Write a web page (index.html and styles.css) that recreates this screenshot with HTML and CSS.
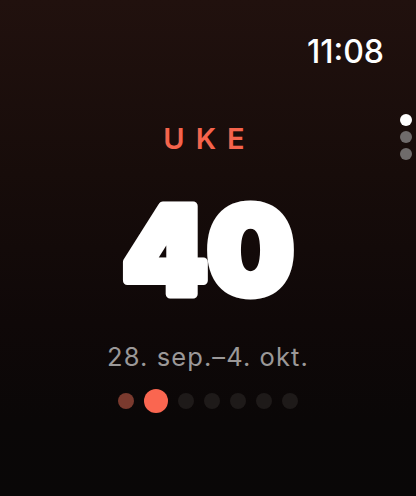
FILE: index.html
```html
<!DOCTYPE html>
<html lang="nb">
<head>
<meta charset="utf-8">
<title>Uke 40</title>
<link rel="stylesheet" href="styles.css">
</head>
<body>
<div class="screen">
  <header class="status">
    <span class="time">11:08</span>
  </header>
  <main class="week">
    <div class="label">UKE</div>
    <svg class="num" viewBox="0 0 220 150" width="220" height="150" aria-label="40">
      <text class="num-text" x="110" y="120" text-anchor="middle">40</text>
    </svg>
    <div class="range">28. sep.–4. okt.</div>
    <div class="dots">
      <span class="dot dot-prev"></span>
      <span class="dot dot-current"></span>
      <span class="dot"></span>
      <span class="dot"></span>
      <span class="dot"></span>
      <span class="dot"></span>
      <span class="dot"></span>
    </div>
  </main>
  <div class="pager">
    <span class="pager-dot pager-active"></span>
    <span class="pager-dot"></span>
    <span class="pager-dot"></span>
  </div>
</div>
</body>
</html>
```
FILE: styles.css
```css
html, body {
  margin: 0;
  padding: 0;
}

body {
  width: 416px;
  height: 496px;
  overflow: hidden;
  background: #080606;
  font-family: Inter, "Noto Sans", sans-serif;
}

.screen {
  position: relative;
  width: 416px;
  height: 496px;
  box-sizing: border-box;
  padding-top: 36px;
  background: linear-gradient(180deg, #21110e 0%, #170c0a 35%, #0f0808 65%, #0a0707 85%, #090707 100%);
  display: flex;
  flex-direction: column;
}

.status {
  display: flex;
  justify-content: flex-end;
  padding-right: 32px;
}

.time {
  color: #ffffff;
  font-size: 32px;
  line-height: 32px;
  font-weight: 500;
}

.week {
  display: flex;
  flex-direction: column;
  align-items: center;
}

.label {
  margin-top: 56px;
  color: #f5644c;
  font-size: 29px;
  line-height: 29px;
  font-weight: 600;
  letter-spacing: 11px;
  padding-left: 3px;
}

.num {
  display: block;
  margin-top: 21px;
}

.num-text {
  font-family: Inter, sans-serif;
  font-weight: 900;
  font-size: 121px;
  fill: #ffffff;
  stroke: #ffffff;
  stroke-width: 9px;
  stroke-linejoin: round;
}

.range {
  margin-top: 20px;
  color: #9b9898;
  font-size: 25.5px;
  line-height: 25px;
  font-weight: 400;
  letter-spacing: 1.1px;
}

.dots {
  margin-top: 20px;
  height: 24px;
  display: flex;
  align-items: center;
  gap: 10px;
}

.dot {
  width: 16px;
  height: 16px;
  border-radius: 50%;
  background: #1e1a19;
}

.dot-prev {
  background: #7a3a2e;
}

.dot-current {
  width: 24px;
  height: 24px;
  background: #fa6650;
}

.pager {
  position: absolute;
  right: 4px;
  top: 114px;
  display: flex;
  flex-direction: column;
  gap: 5px;
}

.pager-dot {
  width: 12px;
  height: 12px;
  border-radius: 50%;
  background: #6f6b6b;
}

.pager-active {
  background: #ffffff;
}
```
